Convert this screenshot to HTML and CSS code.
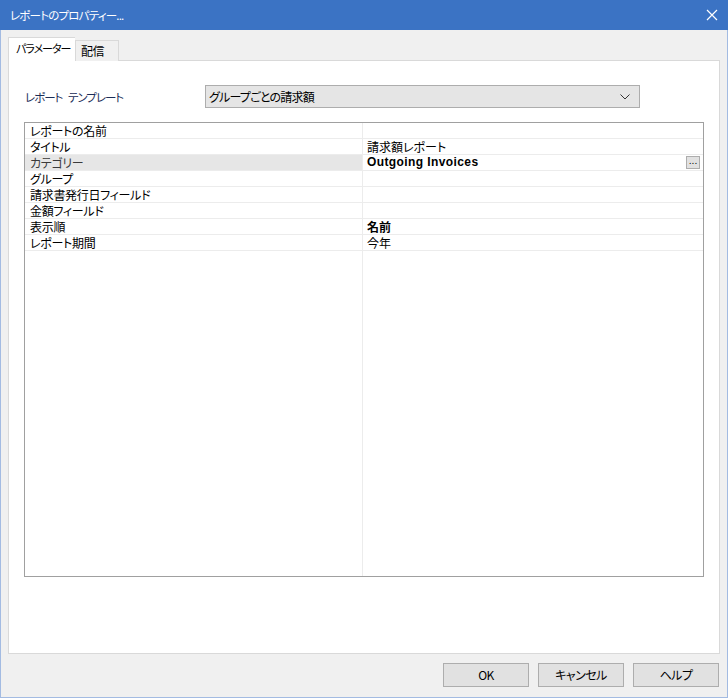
FILE: index.html
```html
<!DOCTYPE html>
<html lang="ja">
<head>
<meta charset="utf-8">
<title>レポートのプロパティー</title>
<link rel="stylesheet" href="styles.css">
</head>
<body>
<div class="window">
  <div class="titlebar">
    <span class="title">レポートのプロパティー...</span>
    <svg class="close" width="12" height="12" viewBox="0 0 12 12"><path d="M1 1 L11 11 M11 1 L1 11" stroke="#ffffff" stroke-width="1.2" fill="none"/></svg>
  </div>
  <div class="client">
    <div class="tabs">
      <div class="tab active">パラメーター</div>
      <div class="tab">配信</div>
    </div>
    <div class="page">
      <div class="template-row">
        <span class="label">レポート テンプレート</span>
        <div class="combo">
          <span class="combo-text">グループごとの請求額</span>
          <svg class="chev" width="10" height="6" viewBox="0 0 10 6"><path d="M0.5 0.5 L5 5 L9.5 0.5" stroke="#333" stroke-width="1" fill="none"/></svg>
        </div>
      </div>
      <div class="grid">
        <div class="rows">
          <div class="row"><div class="name">レポートの名前</div><div class="value"></div></div>
          <div class="row"><div class="name">タイトル</div><div class="value">請求額レポート</div></div>
          <div class="row selected"><div class="name">カテゴリー</div><div class="value bold en">Outgoing Invoices<span class="dots">...</span></div></div>
          <div class="row"><div class="name">グループ</div><div class="value"></div></div>
          <div class="row"><div class="name">請求書発行日フィールド</div><div class="value"></div></div>
          <div class="row"><div class="name">金額フィールド</div><div class="value"></div></div>
          <div class="row"><div class="name">表示順</div><div class="value bold">名前</div></div>
          <div class="row"><div class="name">レポート期間</div><div class="value">今年</div></div>
        </div>
        <div class="filler"><div class="fill-left"></div><div class="fill-right"></div></div>
      </div>
    </div>
    <div class="buttons">
      <button class="btn">OK</button>
      <button class="btn">キャンセル</button>
      <button class="btn">ヘルプ</button>
    </div>
  </div>
</div>
</body>
</html>
```

FILE: styles.css
```css
* { box-sizing: border-box; }
html, body { margin: 0; padding: 0; }
body {
  width: 728px;
  height: 698px;
  font-family: "Noto Sans CJK JP", "Noto Sans", sans-serif;
  font-feature-settings: "palt" 1;
  font-size: 12px;
  color: #000;
  background: #f0f0f0;
}
.window {
  width: 728px;
  height: 698px;
  display: flex;
  flex-direction: column;
  border-left: 1px solid #a3bbe2;
  border-right: 1px solid #a3bbe2;
  border-bottom: 1px solid #a3bbe2;
  background: #f0f0f0;
}
.titlebar {
  height: 31px;
  margin: 0 -1px;
  background: #3b73c4;
  display: flex;
  align-items: center;
  padding: 0 10px 0 10px;
  color: #fff;
}
.title { flex: 1; font-size: 11.5px; letter-spacing: -0.8px; line-height: 16px; padding-bottom: 1px; }
.client {
  flex: 1;
  display: flex;
  flex-direction: column;
  padding: 8px 7px 10px 7px;
}
.tabs {
  display: flex;
  align-items: flex-end;
  height: 23px;
  position: relative;
  z-index: 1;
  margin-bottom: -1px;
}
.tab {
  height: 21px;
  border: 1px solid #d9d9d9;
  border-bottom: none;
  background: #f0f0f0;
  line-height: 19px;
  font-size: 12px;
  white-space: nowrap;
}
.tab.active {
  height: 24px;
  width: 67px;
  padding: 0 0 0 7px;
  background: #fff;
  border-right: none;
  line-height: 20px;
  font-size: 11px;
  letter-spacing: -1px;
}
.tab:not(.active) { width: 44px; padding-left: 5px; letter-spacing: -0.5px; }
.page {
  height: 594px;
  border: 1px solid #d9d9d9;
  background: #fff;
  padding: 24px 15px 0 15px;
  display: flex;
  flex-direction: column;
}
.template-row {
  display: flex;
  align-items: center;
  height: 23px;
}
.label {
  width: 181px;
  color: #1b2d57;
  font-size: 11.5px;
  letter-spacing: -1px;
  word-spacing: 4px;
  padding-left: 1px;
  white-space: pre;
}
.combo {
  width: 435px;
  height: 23px;
  border: 1px solid #adadad;
  background: #e5e5e5;
  display: flex;
  align-items: center;
  justify-content: space-between;
  padding: 0 6px 0 3px;
  font-size: 12px;
}
.combo-text { letter-spacing: -0.8px; }
.chev { margin-right: 3px; }
.grid {
  margin-top: 14px;
  width: 680px;
  height: 455px;
  border: 1px solid #a0a0a0;
  display: flex;
  flex-direction: column;
  background: #fff;
}
.rows { display: flex; flex-direction: column; }
.row {
  display: flex;
  height: 16px;
  border-bottom: 1px solid #ececec;
}
.name {
  width: 338px;
  padding-left: 5px;
  border-right: 1px solid #ececec;
  line-height: 15px;
  font-size: 12px;
  letter-spacing: -0.3px;
  white-space: nowrap;
}
.value {
  flex: 1;
  padding-left: 4px;
  line-height: 15px;
  font-size: 12px;
  display: flex;
  align-items: center;
  justify-content: space-between;
  padding-right: 3px;
}
.row.selected .name { background: #e6e6e6; color: #3a3a3a; }
.bold { font-weight: bold; }
.en { font-family: "Liberation Sans", "Noto Sans CJK JP", sans-serif; font-size: 12px; letter-spacing: 0.4px; }
.dots {
  width: 14px;
  height: 13px;
  border: 1px solid #adadad;
  background: #e1e1e1;
  font-weight: normal;
  font-size: 9px;
  line-height: 8px;
  text-align: center;
  letter-spacing: 0;
  font-family: "DejaVu Sans", sans-serif;
}
.filler { flex: 1; display: flex; }
.fill-left { width: 338px; border-right: 1px solid #ececec; }
.fill-right { flex: 1; }
.buttons {
  display: flex;
  justify-content: flex-end;
  gap: 9px;
  margin-top: 9px;
  padding-right: 1px;
}
.btn {
  width: 86px;
  height: 24px;
  border: 1px solid #adadad;
  background: #e1e1e1;
  font-family: "Noto Sans CJK JP", "Noto Sans", sans-serif;
  font-feature-settings: "palt" 1;
  font-size: 12px;
  letter-spacing: -0.5px;
  color: #000;
  padding: 0;
  line-height: 20px;
}
```
